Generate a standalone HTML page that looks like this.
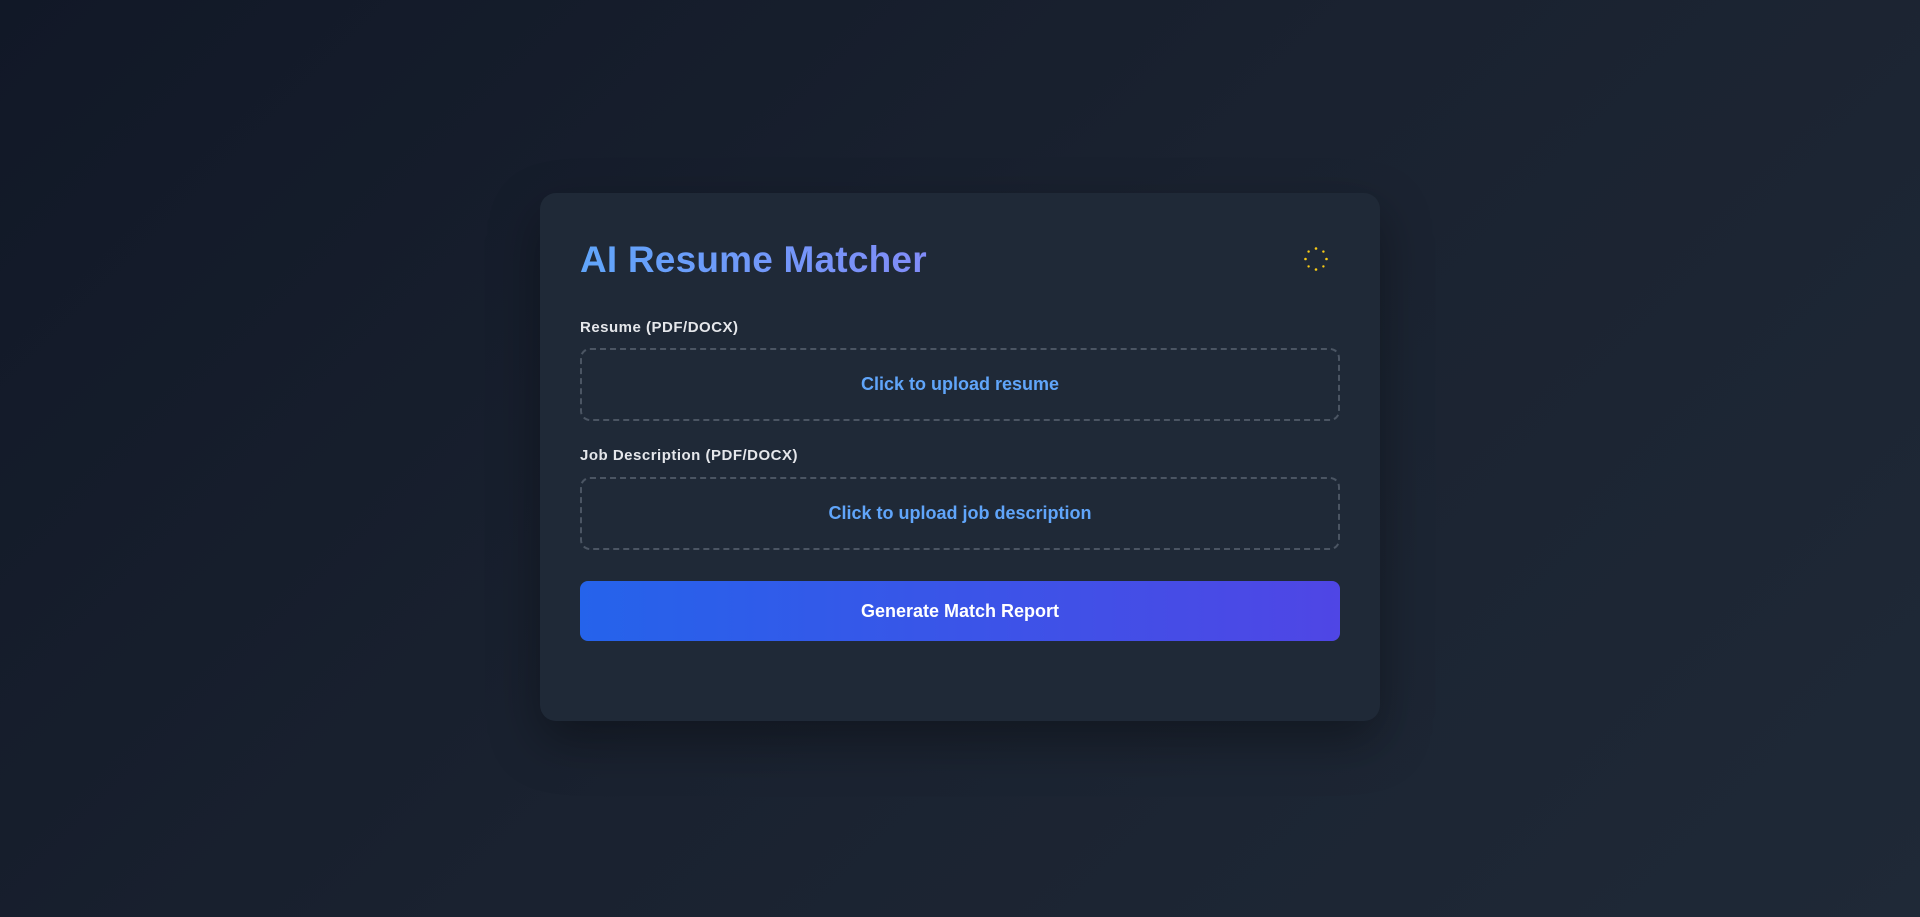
<!DOCTYPE html>
<html><head><meta charset="utf-8"><style>
*{box-sizing:border-box;margin:0;padding:0}
html,body{width:1920px;height:917px;overflow:hidden}
body{background:linear-gradient(135deg,#111827 0%,#1a2230 50%,#1f2937 100%);font-family:"Liberation Sans",sans-serif;position:relative}
.card{position:absolute;left:540px;top:193px;width:840px;height:528px;background:#1f2937;border-radius:16px;box-shadow:0 20px 50px rgba(0,0,0,.35);padding:0 40px}
h1{position:absolute;left:40px;top:45px;font-size:37px;font-weight:bold;background:linear-gradient(90deg,#60a5fa,#818cf8);-webkit-background-clip:text;background-clip:text;color:transparent;line-height:44px;letter-spacing:0.2px}
.spin{position:absolute;left:763px;top:53px}
.label{position:absolute;left:40px;font-size:15px;font-weight:bold;color:#e5e7eb;letter-spacing:0.5px}
.box{position:absolute;left:40px;width:760px;height:73px;border:2px dashed #4b5563;border-radius:10px;display:flex;align-items:center;justify-content:center;color:#60a5fa;font-size:18px;font-weight:bold}
.btn{position:absolute;left:40px;top:388px;width:760px;height:60px;border-radius:8px;background:linear-gradient(90deg,#2563eb,#4f46e5);color:#fff;font-size:18px;font-weight:bold;display:flex;align-items:center;justify-content:center}
</style></head><body>
<div class="card">
<h1>AI Resume Matcher</h1>
<svg class="spin" width="26" height="26" viewBox="0 0 26 26">
<g fill="#facc15">
<circle cx="13" cy="2.5" r="1.3"/><circle cx="13" cy="23.5" r="1.3"/>
<circle cx="2.5" cy="13" r="1.3"/><circle cx="23.5" cy="13" r="1.3"/>
<circle cx="5.6" cy="5.6" r="1.2"/><circle cx="20.4" cy="20.4" r="1.2"/>
<circle cx="5.6" cy="20.4" r="1.2"/><circle cx="20.4" cy="5.6" r="1.2"/>
</g></svg>
<div class="label" style="top:126px">Resume (PDF/DOCX)</div>
<div class="box" style="top:155px">Click to upload resume</div>
<div class="label" style="top:254px">Job Description (PDF/DOCX)</div>
<div class="box" style="top:284px">Click to upload job description</div>
<div class="btn">Generate Match Report</div>
</div>
</body></html>
